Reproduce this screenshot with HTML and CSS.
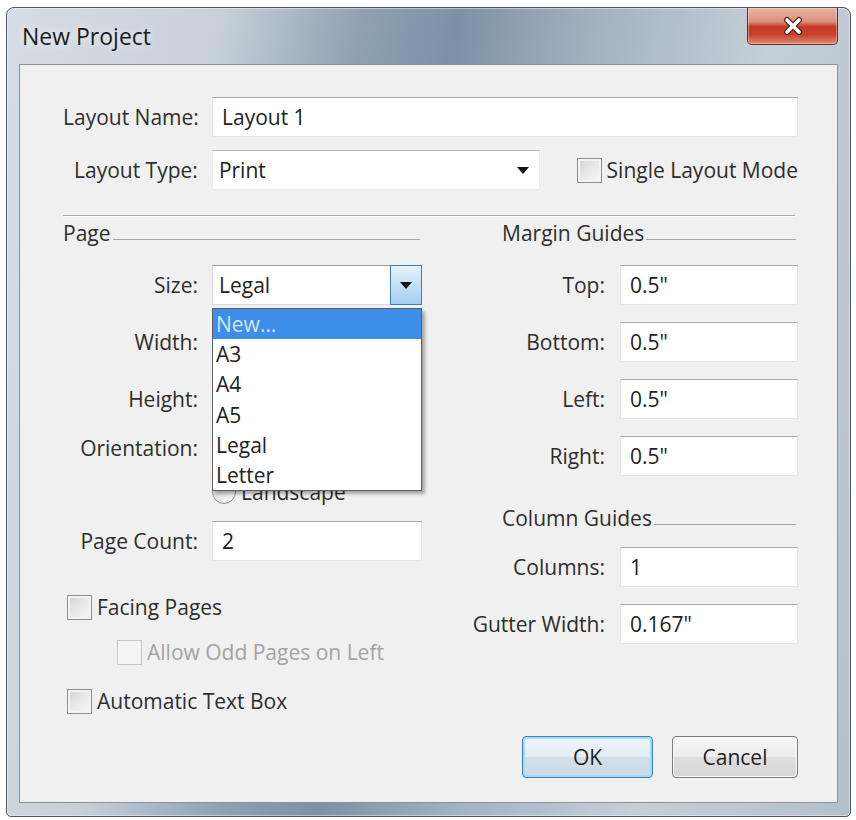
FILE: index.html
```html
<!DOCTYPE html>
<html lang="en">
<head>
    <meta charset="UTF-8">
    <meta name="viewport" content="width=device-width, initial-scale=1.0">
    <title>New Project</title>
    <link rel="stylesheet" href="styles.css">
</head>
<body>
    <div class="window">
        <div class="titlebar">
            <span class="title">New Project</span>
            <button class="close-btn" aria-label="Close">
                <svg width="24" height="20" viewBox="0 0 24 20">
                    <path d="M6 4 L18 16 M18 4 L6 16" stroke="#4a211a" stroke-width="6" stroke-linecap="round"/>
                    <path d="M6 4 L18 16 M18 4 L6 16" stroke="#ffffff" stroke-width="3.6" stroke-linecap="round"/>
                </svg>
            </button>
        </div>

        <div class="client">
            <div class="row">
                <label class="lbl">Layout Name:</label>
                <input class="textbox wide" type="text" value="Layout 1">
            </div>
            <div class="row row-type">
                <label class="lbl">Layout Type:</label>
                <div class="combo-flat">Print<span class="arrow"></span></div>
                <div class="check single-mode"><span class="box"></span>Single Layout Mode</div>
            </div>

            <div class="separator"></div>

            <div class="columns">
                <!-- Page column -->
                <section class="col col-page">
                    <div class="group-head">Page</div>
                    <div class="grid">
                        <label class="lbl">Size:</label>
                        <div class="combo">
                            <span class="combo-value">Legal</span>
                            <span class="combo-btn"><span class="arrow"></span></span>
                            <ul class="dropdown">
                                <li class="selected">New…</li>
                                <li>A3</li>
                                <li>A4</li>
                                <li>A5</li>
                                <li>Legal</li>
                                <li>Letter</li>
                            </ul>
                        </div>

                        <label class="lbl">Width:</label>
                        <input class="textbox" type="text" value="">

                        <label class="lbl">Height:</label>
                        <input class="textbox" type="text" value="">

                        <label class="lbl lbl-top">Orientation:</label>
                        <div class="radios">
                            <div class="radio" aria-label="Portrait"><span class="dot"></span></div>
                            <div class="radio"><span class="dot"></span>Landscape</div>
                        </div>

                        <label class="lbl">Page Count:</label>
                        <input class="textbox" type="text" value="2">
                    </div>

                    <div class="checks">
                        <div class="check"><span class="box"></span>Facing Pages</div>
                        <div class="check disabled indent"><span class="box"></span>Allow Odd Pages on Left</div>
                        <div class="check auto-box"><span class="box"></span>Automatic Text Box</div>
                    </div>
                </section>

                <!-- Guides column -->
                <section class="col col-guides">
                    <div class="group-head">Margin Guides</div>
                    <div class="grid">
                        <label class="lbl">Top:</label>
                        <input class="textbox" type="text" value='0.5"'>

                        <label class="lbl">Bottom:</label>
                        <input class="textbox" type="text" value='0.5"'>

                        <label class="lbl">Left:</label>
                        <input class="textbox" type="text" value='0.5"'>

                        <label class="lbl">Right:</label>
                        <input class="textbox" type="text" value='0.5"'>

                        <div class="group-head span">Column Guides</div>

                        <label class="lbl">Columns:</label>
                        <input class="textbox" type="text" value="1">

                        <label class="lbl">Gutter Width:</label>
                        <input class="textbox" type="text" value='0.167"'>
                    </div>
                </section>
            </div>

            <div class="footer">
                <button class="btn btn-default">OK</button>
                <button class="btn">Cancel</button>
            </div>
        </div>
    </div>
</body>
</html>
```

FILE: styles.css
```css
* {
    box-sizing: border-box;
}

body {
    margin: 0;
    background: #ffffff;
    font-family: "Open Sans", "Noto Sans", sans-serif;
    font-size: 21px;
    color: #2e2e2e;
}

.window {
    width: 845px;
    margin: 7px 0 0 6px;
    padding: 0 12px 13px 12px;
    border: 1px solid #4a5560;
    border-radius: 8px 8px 5px 5px;
    background: linear-gradient(100deg, #d6dde4 0%, #c7d0d9 22%, #8fa1b3 36%, #7d91a5 46%, #a3b2c1 60%, #c5cfd8 78%, #b3bfca 100%);
    box-shadow: inset 0 0 0 1px rgba(255, 255, 255, 0.45);
}

.titlebar {
    height: 56px;
    display: flex;
    justify-content: space-between;
    align-items: flex-start;
}

.title {
    margin-top: 13px;
    padding-left: 3px;
    font-size: 23px;
    line-height: 30px;
    color: #1c1c1c;
    text-shadow: 0 0 8px rgba(255, 255, 255, 0.9);
}

.close-btn {
    width: 91px;
    height: 37px;
    padding: 0;
    border: 1px solid #5e3129;
    border-top: none;
    border-radius: 0 0 5px 5px;
    background: linear-gradient(#e8b3a5 0%, #dc8f7b 38%, #c23a22 52%, #c8412a 74%, #e08b73 100%);
    box-shadow: inset 0 0 0 1px rgba(255, 220, 210, 0.45);
    display: flex;
    align-items: center;
    justify-content: center;
}

.client {
    background: #f0f0f0;
    border: 1px solid #86939f;
    padding: 32px 39px 24px 43px;
}

.row {
    display: flex;
    align-items: center;
    height: 40px;
}

.row-type {
    margin-top: 13px;
}

.lbl {
    width: 135px;
    margin-right: 14px;
    text-align: right;
    white-space: nowrap;
    color: #2e2e2e;
}

.textbox {
    height: 40px;
    padding: 0 9px;
    border: 1px solid #e6e6e6;
    border-top-color: #a9a9a9;
    background: #ffffff;
    font-family: inherit;
    font-size: 21px;
    color: #222222;
    outline: none;
}

.wide {
    flex: 1;
}

.combo-flat {
    width: 328px;
    height: 40px;
    display: flex;
    align-items: center;
    justify-content: space-between;
    padding: 0 10px 0 6px;
    background: #ffffff;
    border: 1px solid #ececec;
    border-top-color: #b3b3b3;
    color: #222222;
}

.arrow {
    width: 0;
    height: 0;
    border-left: 6px solid transparent;
    border-right: 6px solid transparent;
    border-top: 7px solid #111111;
}

/* checkboxes */
.check {
    display: flex;
    align-items: center;
    gap: 5px;
    height: 26px;
    white-space: nowrap;
}

.box {
    width: 25px;
    height: 25px;
    border: 1px solid #8e8f8f;
    background: linear-gradient(135deg, #d3d3d3 0%, #e9e9e9 50%, #f9f9f9 100%);
    box-shadow: inset 0 0 0 2px #f3f3f3;
    flex-shrink: 0;
}

.single-mode {
    margin-left: 37px;
}

.check.disabled {
    color: #a3a3a3;
}

.check.disabled .box {
    border-color: #c6c6c6;
    background: #f5f5f5;
    box-shadow: none;
}

.separator {
    margin: 25px 3px 0 0;
    border-top: 1px solid #aaaaaa;
    border-bottom: 1px solid #ffffff;
}

.columns {
    display: flex;
    gap: 38px;
    margin-top: 4px;
}

.col-page {
    width: 359px;
}

.col-guides {
    width: 338px;
}

.group-head {
    display: flex;
    align-items: flex-end;
    height: 24px;
    line-height: 24px;
    white-space: nowrap;
    color: #2e2e2e;
}

.group-head::after {
    content: "";
    flex: 1;
    margin: 0 0 5px 2px;
    border-bottom: 1px solid #a5a5a5;
}

.col-page > .group-head {
    margin-right: 2px;
}

.col-guides .group-head {
    padding-left: 42px;
    margin-right: 2px;
}

.grid {
    display: grid;
    row-gap: 17px;
    column-gap: 14px;
    align-items: center;
    margin-top: 20px;
}

.col-page .grid {
    grid-template-columns: 135px 210px;
}

.col-guides .grid {
    grid-template-columns: 145px 178px;
    column-gap: 15px;
}

.grid .lbl {
    width: auto;
    margin: 0;
}

.lbl-top {
    align-self: start;
    line-height: 24px;
}

.group-head.span {
    grid-column: 1 / -1;
    margin-top: 13px;
}

/* size combo with open list */
.combo {
    position: relative;
    height: 40px;
    display: flex;
    background: #ffffff;
    border: 1px solid #d9d9d9;
    border-top-color: #9a9a9a;
}

.combo-value {
    flex: 1;
    padding-left: 6px;
    line-height: 38px;
    color: #222222;
}

.combo-btn {
    width: 32px;
    display: flex;
    align-items: center;
    justify-content: center;
    border: 1px solid #3c7fb1;
    background: linear-gradient(#e5f1fb 0%, #c4e0f7 50%, #a6cdee 100%);
    margin: -1px -1px -1px 0;
}

.dropdown {
    position: absolute;
    top: 42px;
    left: -1px;
    width: 210px;
    margin: 0;
    padding: 0;
    list-style: none;
    background: #ffffff;
    border: 1px solid #5f5f5f;
    box-shadow: 3px 3px 3px rgba(0, 0, 0, 0.3);
    z-index: 10;
}

.dropdown li {
    height: 30.2px;
    line-height: 30px;
    padding-left: 3px;
    color: #222222;
}

.dropdown li.selected {
    background: #3d8ee8;
    color: #cfe6ff;
}

.radios {
    display: flex;
    flex-direction: column;
    gap: 20px;
}

.radio {
    display: flex;
    align-items: center;
    gap: 5px;
    height: 24px;
    line-height: 24px;
}

.dot {
    width: 24px;
    height: 24px;
    border-radius: 50%;
    border: 1px solid #8e8f8f;
    background: linear-gradient(135deg, #d6d6d6, #f8f8f8);
}

.checks {
    margin-top: 33px;
    padding-left: 4px;
}

.check.indent {
    margin: 19px 0 0 50px;
}

.check.auto-box {
    margin-top: 23px;
}

.footer {
    display: flex;
    justify-content: flex-end;
    gap: 19px;
    margin-top: 22px;
}

.btn {
    width: 126px;
    height: 42px;
    font-family: inherit;
    font-size: 21px;
    color: #1e1e1e;
    border: 1px solid #7a7a7a;
    border-radius: 4px;
    background: linear-gradient(#f6f6f6 0%, #ececec 50%, #dedede 51%, #d6d6d6 100%);
    box-shadow: inset 0 0 0 1px #fbfbfb;
}

.btn-default {
    width: 131px;
    border: 1px solid #3c7fb1;
    box-shadow: inset 0 0 0 2px #9fdcf8;
    background: linear-gradient(#eef5fa 0%, #e3edf4 50%, #d3e0ea 51%, #cbd9e4 100%);
}
```
